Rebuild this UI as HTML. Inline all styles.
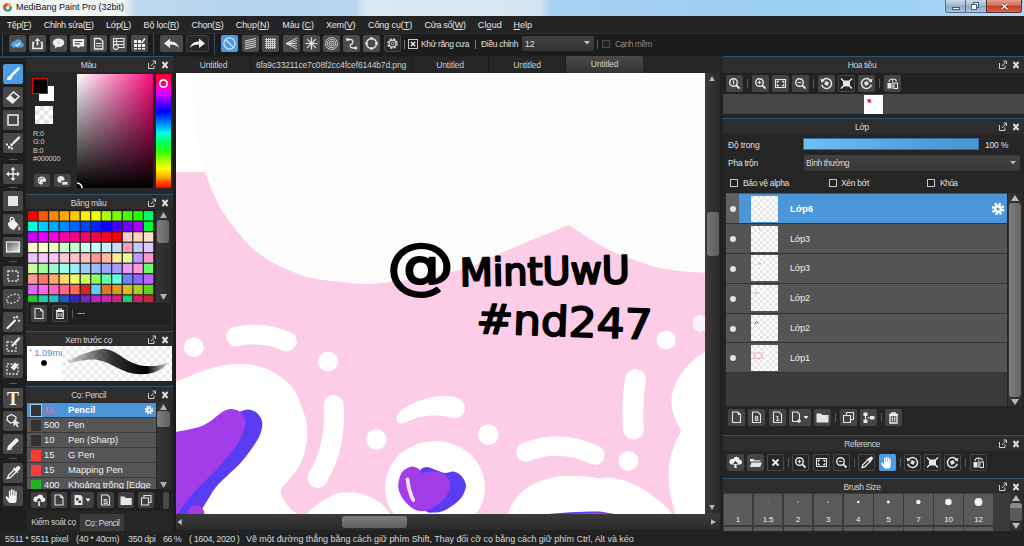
<!DOCTYPE html>
<html lang="vi">
<head>
<meta charset="utf-8">
<title>MediBang Paint Pro (32bit)</title>
<style>
*{box-sizing:border-box;margin:0;padding:0}
html,body{width:1024px;height:546px;overflow:hidden;background:#212121}
body{position:relative;font-family:"Liberation Sans","DejaVu Sans",sans-serif;font-size:10px;color:#dcdcdc;line-height:1}
.abs{position:absolute}
svg{display:block}
#title{left:0;top:0;width:1024px;height:16px;background:linear-gradient(90deg,#f0f4f2 0,#eef3f2 122px,#bfd9ee 136px,#b3d3ee 250px,#b7d6ef 355px,#dce8f3 366px,#d6e5f2 540px,#a9d0f0 552px,#9ccdf3 760px,#9fd0f5 900px,#b0daf8 1024px)}
#title .tt{left:16px;top:3px;font-size:9px;color:#111;white-space:nowrap}
#menubar{left:0;top:16px;width:1024px;height:17px;background:#242424}
#menubar span{position:absolute;top:5px;font-size:9px;color:#e4e4e4;white-space:nowrap;letter-spacing:-.2px}
#toolbar{left:0;top:33px;width:1024px;height:23px;background:#1c1c1c;border-top:1px solid #2c2c2c}
.tb{position:absolute;top:35.200px;width:17px;height:17px;background:#4b4b4b;border-radius:2px}
.ph{position:absolute;height:16px;background:#2e2c2c;border-top:1px solid #2d5272;color:#d4d4d4;text-align:center;font-size:8.500px;letter-spacing:-.4px;line-height:16px;white-space:nowrap}
.ph i{position:absolute;right:0;top:3px;width:26px;height:10px}
.tool{position:absolute;left:3px;width:20px;height:20px;background:#484848;border-radius:2px}
.tsep{position:absolute;left:9px;width:8px;height:1px;background:#555}
.tab{position:absolute;top:57px;height:16px;color:#cfcfcf;text-align:center;font-size:8.500px;letter-spacing:-.16px;line-height:16px;border-right:1px solid #1a1a1a;white-space:nowrap;overflow:hidden}
.br{position:relative;height:15px;border-bottom:1px solid #3c3c3c;white-space:nowrap}
.br .sq{position:absolute;left:3.500px;top:1.800px;width:10.500px;height:10.500px}
.br .sz{position:absolute;left:17px;top:2.800px}
.br .nm{position:absolute;left:41px;top:2.800px}
.bb{position:absolute;top:492px;width:16px;height:16px;background:#404040;border-radius:2px}
.st{position:absolute;top:535px;font-size:9px;color:#d8d8d8;white-space:nowrap;letter-spacing:-.3px}
.rb{position:absolute;height:17px;background:#444;border-radius:2px}
</style>
</head>
<body>

<div id="title" class="abs"><span class="abs tt">MediBang Paint Pro (32bit)</span>
<svg class="abs" style="left:3px;top:3px" width="9" height="9" viewBox="0 0 9 9"><circle cx="4.500" cy="4.500" r="4.300" fill="#38a860"/><path d="M4.500 .2a4.300 4.300 0 0 0-3.800 6.300l3.800-2z" fill="#e04848"/><path d="M4.500 .2a4.300 4.300 0 0 1 4.200 3.500l-4.200.8z" fill="#f0b030"/><path d="M8.700 3.700a4.300 4.300 0 0 1-2 4.500l-2.200-3.700z" fill="#3880d8"/><circle cx="4.700" cy="4.700" r="1.700" fill="#f4f4f4"/></svg>
<div class="abs wc-min" style="left:945px;top:0;width:21px;height:13px;border:1px solid #5a6d80;border-top:0;border-radius:0 0 0 3px;background:linear-gradient(#c8d8e8,#a4bcd4 45%,#8aa8c6 50%,#a8c4de)"><div class="abs" style="left:6px;top:7px;width:8px;height:3px;background:#fff;border:1px solid #465a70"></div></div>
<div class="abs" style="left:965px;top:0;width:22px;height:13px;border:1px solid #5a6d80;border-top:0;background:linear-gradient(#c8d8e8,#a4bcd4 45%,#8aa8c6 50%,#a8c4de)"><div class="abs" style="left:7px;top:2px;width:6px;height:6px;border:1px solid #465a70;background:#e8eef4"></div><div class="abs" style="left:5px;top:4px;width:6px;height:6px;border:1px solid #465a70;background:#fff"></div></div>
<div class="abs wc-close" style="left:986px;top:0;width:36px;height:13px;border:1px solid #5a3030;border-top:0;border-radius:0 0 3px 0;background:linear-gradient(#e8a090,#d46a58 45%,#c03c28 50%,#d46848)"><svg class="abs" style="left:13px;top:3px" width="9" height="7" viewBox="0 0 9 7"><path d="M1.500 .8l6 5.400M7.500 .8l-6 5.400" stroke="#4a2020" stroke-width="2.600"/><path d="M1.500 .8l6 5.400M7.500 .8l-6 5.400" stroke="#fff" stroke-width="1.500"/></svg></div>
</div>
<div id="menubar" class="abs">
<span style="left:6.8px;letter-spacing:-0.45px">Tệp(<u>F</u>)</span>
<span style="left:43.8px;letter-spacing:-0.3px">Chỉnh sửa(<u>E</u>)</span>
<span style="left:106px;letter-spacing:-0.35px">Lớp(<u>L</u>)</span>
<span style="left:143.6px;letter-spacing:-0.22px">Bộ lọc(<u>R</u>)</span>
<span style="left:191.4px;letter-spacing:-0.2px">Chọn(<u>S</u>)</span>
<span style="left:235.7px;letter-spacing:-0.05px">Chụp(<u>N</u>)</span>
<span style="left:282.3px;letter-spacing:-0.14px">Màu (<u>C</u>)</span>
<span style="left:326px;letter-spacing:-0.2px">Xem(<u>V</u>)</span>
<span style="left:368px;letter-spacing:-0.1px">Công cụ(<u>T</u>)</span>
<span style="left:424.5px;letter-spacing:-0.32px">Cửa sổ(<u>W</u>)</span>
<span style="left:477.8px;letter-spacing:0.12px">Cl<u>o</u>ud</span>
<span style="left:513.4px;letter-spacing:0px"><u>H</u>elp</span>
</div>
<div id="toolbar" class="abs"></div>
<div class="abs" style="left:2px;top:34px;width:1px;height:21px;background:#2f4d69"></div>
<div class="abs" style="left:153px;top:34px;width:1px;height:21px;background:#2f4d69"></div>
<div class="abs" style="left:214px;top:34px;width:1px;height:21px;background:#2f4d69"></div>
<!-- toolbar group 1 -->
<div class="tb" style="left:9px"><svg width="17" height="17" viewBox="0 0 17 17"><path d="M4.5 12.5h8a2.6 2.6 0 0 0 .4-5.1 3.6 3.6 0 0 0-6.9-.8A3 3 0 0 0 4.500 12.500z" fill="#5b9fe6"/><path d="M6.5 9.300l1.700 1.600 2.900-3.200" fill="none" stroke="#e9f2ff" stroke-width="1.300"/></svg></div>
<div class="tb" style="left:29.400px"><svg width="17" height="17" viewBox="0 0 17 17"><path d="M5.500 7.500h-1.500v6h9v-6h-1.500" fill="none" stroke="#ececec" stroke-width="1.700"/><path d="M8.500 10.500v-6.500" stroke="#ececec" stroke-width="1.700"/><path d="M5.800 6l2.700-3 2.700 3z" fill="#ececec"/></svg></div>
<div class="tb" style="left:49.700px"><svg width="17" height="17" viewBox="0 0 17 17"><ellipse cx="8.500" cy="7.800" rx="5.800" ry="4.200" fill="#ececec"/><path d="M5.500 10.500l-.8 3.200 3.600-2.400z" fill="#ececec"/><circle cx="8.500" cy="7.500" r="1" fill="#bdbdbd"/></svg></div>
<div class="tb" style="left:70px"><svg width="17" height="17" viewBox="0 0 17 17"><path d="M2.800 4h11.400v7.500h-4.200l-1.500 2-1.500-2h-4.200z" fill="#ececec"/><path d="M4.800 6.500h7.400M4.800 8.800h5" stroke="#4b4b4b" stroke-width="1.200"/></svg></div>
<div class="tb" style="left:90.300px"><svg width="17" height="17" viewBox="0 0 17 17"><path d="M4.500 3.500h5.500l2.800 2.800v7.700h-8.300z" fill="none" stroke="#ececec" stroke-width="1.300"/><path d="M6 8.500h5.500M6 11h5.500" stroke="#ececec" stroke-width="1.200"/></svg></div>
<div class="tb" style="left:110px"><svg width="17" height="17" viewBox="0 0 17 17"><path d="M3.500 3.500h10.500v9h-10.500zM3.500 6.500h10.500M3.500 9.500h10.500M6.500 3.500v9" fill="none" stroke="#e4e4e4" stroke-width="1.100"/><circle cx="5.800" cy="12" r="2.400" fill="#4b4b4b" stroke="#e4e4e4" stroke-width="1.100"/></svg></div>
<div class="tb" style="left:130.500px"><svg width="17" height="17" viewBox="0 0 17 17"><path d="M3 5h3v3h-3zM7 5h3v3h-3zM3 9h3v3h-3zM7 9h3v3h-3zM11 9h3v3h-3zM3 13h3v1.500h-3zM7 13h3v1.500h-3zM11 13h3v1.500h-3z" fill="#ececec"/><path d="M10.500 8l3.500-4.500" stroke="#ececec" stroke-width="1.600"/></svg></div>
<!-- undo / redo -->
<div class="tb" style="left:160px;width:23px"><svg width="23" height="17" viewBox="0 0 23 17"><path d="M4 8.500l6-5v3c4.500 0 8 2 9 6.500-2.200-2.600-5-3.400-9-3.400v3.400z" fill="#f0f0f0"/></svg></div>
<div class="tb" style="left:186px;width:23px;background:#282828;border:1px solid #3d3d3d"><svg width="21" height="15" viewBox="1 1 21 15"><path d="M19 8.500l-6-5v3c-4.500 0-8 2-9 6.500 2.200-2.600 5-3.400 9-3.400v3.400z" fill="#f0f0f0"/></svg></div>
<!-- snap group -->
<div class="tb" style="left:221px;background:#4a9ce4"><svg width="17" height="17" viewBox="0 0 17 17"><circle cx="8.500" cy="8.500" r="5.600" fill="none" stroke="#cfe6fb" stroke-width="1.200"/><path d="M4.800 4.500l7.600 7.800" stroke="#cfe6fb" stroke-width="1.200"/></svg></div>
<div class="tb" style="left:241.500px"><svg width="17" height="17" viewBox="0 0 17 17"><path d="M3 6l11-2.500M3 8l11-2.500M3 10l11-2.500M3 12l11-2.500M3 14l11-2.500" stroke="#d8d8d8" stroke-width="1"/></svg></div>
<div class="tb" style="left:262px"><svg width="17" height="17" viewBox="0 0 17 17"><path d="M4.500 3v11M6.500 3v11M8.500 3v11M10.500 3v11M12.500 3v11M3 4.500h11M3 6.500h11M3 8.500h11M3 10.500h11M3 12.500h11" stroke="#d8d8d8" stroke-width=".9"/></svg></div>
<div class="tb" style="left:282.500px"><svg width="17" height="17" viewBox="0 0 17 17"><path d="M3 8.500l11-5.500M3 8.500l11-2.800M3 8.500h11M3 8.500l11 2.800M3 8.500l11 5.500" stroke="#d8d8d8" stroke-width="1"/></svg></div>
<div class="tb" style="left:302.500px"><svg width="17" height="17" viewBox="0 0 17 17"><path d="M8.500 2.500v12M2.500 8.500h12M4.200 4.200l8.600 8.600M12.800 4.200l-8.600 8.600" stroke="#e4e4e4" stroke-width="1.200"/></svg></div>
<div class="tb" style="left:323px"><svg width="17" height="17" viewBox="0 0 17 17"><g fill="none" stroke="#d8d8d8" stroke-width=".9"><circle cx="8.500" cy="8.500" r="6"/><circle cx="8.500" cy="8.500" r="4.200"/><circle cx="8.500" cy="8.500" r="2.500"/><circle cx="8.500" cy="8.500" r=".8"/></g></svg></div>
<div class="tb" style="left:343px"><svg width="17" height="17" viewBox="0 0 17 17"><path d="M4.500 4.500h3c3 0 3 4 1 4.500s-2 4 1.500 4h3" fill="none" stroke="#e4e4e4" stroke-width="1.300"/><circle cx="4.500" cy="4.500" r="1.500" fill="#e4e4e4"/><circle cx="12.800" cy="13" r="1.500" fill="#e4e4e4"/></svg></div>
<div class="tb" style="left:363px"><svg width="17" height="17" viewBox="0 0 17 17"><circle cx="8.500" cy="8.500" r="5" fill="none" stroke="#e4e4e4" stroke-width="1.400"/><g fill="#e4e4e4"><circle cx="8.500" cy="3.500" r="1.400"/><circle cx="8.500" cy="13.500" r="1.400"/><circle cx="3.500" cy="8.500" r="1.400"/><circle cx="13.500" cy="8.500" r="1.400"/></g></svg></div>
<div class="tb" style="left:384px;background:#2b2b2b;border:1px solid #444"><svg width="15" height="15" viewBox="1 1 15 15"><circle cx="8.500" cy="8.500" r="4.700" fill="none" stroke="#e4e4e4" stroke-width="1.300" stroke-dasharray="2.200 1.500"/><circle cx="8.500" cy="8.500" r="3.400" fill="none" stroke="#e4e4e4" stroke-width="1.100"/><circle cx="8.500" cy="8.500" r="1.300" fill="none" stroke="#e4e4e4" stroke-width=".9"/></svg></div>
<!-- options -->
<div class="abs" style="left:404px;top:40px;width:1px;height:9px;background:#7a7a7a"></div>
<div class="abs" style="left:408px;top:39px;width:10px;height:10px;border:1px solid #c8c8c8;background:#1f1f1f"><svg width="8" height="8" viewBox="0 0 8 8"><path d="M1.800 1.800l4.400 4.400M6.200 1.800l-4.400 4.400" stroke="#e8e8e8" stroke-width="1.400"/></svg></div>
<div class="abs" style="left:421px;top:40px;font-size:8.500px;color:#e0e0e0;white-space:nowrap;letter-spacing:-.37px">Khử răng cưa</div>
<div class="abs" style="left:475px;top:40px;width:1px;height:9px;background:#7a7a7a"></div>
<div class="abs" style="left:481px;top:40px;font-size:8.500px;color:#e0e0e0;white-space:nowrap;letter-spacing:-.31px">Điều chỉnh</div>
<div class="abs" style="left:522px;top:36px;width:72px;height:15px;background:linear-gradient(#414141,#353535);border-radius:2px;font-size:8.500px;color:#e0e0e0;padding:4px 0 0 3px">12<svg class="abs" style="right:4px;top:5px" width="6" height="4" viewBox="0 0 6 4"><path d="M0 0h6l-3 3.500z" fill="#c0c0c0"/></svg></div>
<div class="abs" style="left:597px;top:40px;width:1px;height:9px;background:#5a5a5a"></div>
<div class="abs" style="left:602px;top:40px;width:8px;height:8px;border:1px solid #4a4a4a;background:#222"></div>
<div class="abs" style="left:615px;top:40px;font-size:8.500px;color:#8a8a8a;white-space:nowrap;letter-spacing:-.6px">Cạnh mềm</div>

<svg class="abs" id="cv" style="left:176px;top:73px" width="529" height="441" viewBox="176 73 529 441">
<defs><filter id="b1" x="-20%" y="-20%" width="140%" height="140%"><feGaussianBlur stdDeviation="0.7"/></filter></defs>
<rect x="176" y="73" width="529" height="441" fill="#fff"/>
<path d="M192.5,73 C192.5,100 195,125 198,139 C200,150 203,163 206,173 L206,300 L705,300 L705,73Z" fill="#fcfcfc" filter="url(#b1)"/>
<path d="M176,172 L205,172  C206.5,175.8 210.3,187.3 214.0,195.0 C217.7,202.7 219.7,208.3 227.0,218.0 C234.3,227.7 245.5,243.4 258.0,253.0 C270.5,262.6 287.3,270.5 302.0,275.4 C316.7,280.3 334.7,281.1 346.0,282.5 C357.3,283.9 362.7,284.1 370.0,284.0 C377.3,283.9 382.7,282.8 390.0,282.0 C397.3,281.2 405.7,280.2 414.0,279.0 C422.3,277.8 432.7,275.9 440.0,274.5 C447.3,273.1 453.0,271.6 458.0,270.3 C463.0,269.1 462.0,270.2 470.0,267.0 C478.0,263.8 494.3,256.0 506.0,251.0 C517.7,246.0 529.5,241.3 540.0,237.0 C550.5,232.7 564.2,227.0 569.0,225.0  C572.5,227.3 582.2,234.3 590.0,239.0 C597.8,243.7 604.3,248.2 616.0,253.0 C627.7,257.8 645.2,264.7 660.0,268.0 C674.8,271.3 697.5,272.2 705.0,273.0 L705,514 L176,514Z" fill="#fdcce6"/>
<g filter="url(#b1)"><path d="M176.0,382.0 C178.3,381.0 184.8,378.1 190.0,376.0 C195.2,373.9 201.2,371.3 207.0,369.5 C212.8,367.7 219.0,365.9 225.0,365.0 C231.0,364.1 237.5,363.8 243.0,364.0 C248.5,364.2 253.7,365.0 258.0,366.0 C262.3,367.0 265.2,368.2 269.0,370.0 C272.8,371.8 277.3,374.3 281.0,377.0 C284.7,379.7 288.2,382.7 291.0,386.0 C293.8,389.3 296.2,393.3 298.0,397.0 C299.8,400.7 300.7,404.2 302.0,408.0 C303.3,411.8 305.2,416.3 306.0,420.0 C306.8,423.7 306.9,426.2 307.0,430.0 C307.1,433.8 307.1,438.8 306.5,443.0 C305.9,447.2 305.1,451.3 303.7,455.5 C302.3,459.7 300.1,464.3 298.0,468.0 C295.9,471.7 293.3,474.7 291.0,477.5 C288.7,480.3 285.8,482.8 284.0,485.0 C282.2,487.2 280.6,488.6 280.5,491.0 C280.4,493.4 282.1,496.8 283.5,499.5 C284.9,502.2 286.8,504.6 289.0,507.0 C291.2,509.4 295.7,512.8 297.0,514.0 L176,514Z" fill="#fff"/><path d="M307.0,514.0 C308.2,512.8 311.3,509.2 314.0,507.0 C316.7,504.8 320.0,502.4 323.0,500.5 C326.0,498.6 329.0,496.8 332.0,495.5 C335.0,494.2 337.7,493.3 341.0,492.8 C344.3,492.3 348.5,492.3 352.0,492.5 C355.5,492.7 359.0,493.2 362.0,494.0 C365.0,494.8 367.5,495.9 370.0,497.0 C372.5,498.1 374.8,499.2 377.0,500.5 C379.2,501.8 380.8,502.8 383.0,505.0 C385.2,507.2 388.8,512.5 390.0,514.0 Z" fill="#fff"/><ellipse cx="435" cy="487.5" rx="50" ry="46.5" fill="#fff"/><path d="M508.0,514.0 C508.4,512.8 509.4,509.2 510.5,507.0 C511.6,504.8 512.8,502.7 514.4,500.5 C516.0,498.3 517.9,496.1 520.0,494.0 C522.1,491.9 524.2,489.6 527.0,487.7 C529.8,485.8 533.5,484.0 537.0,482.5 C540.5,481.0 543.9,479.7 547.7,478.7 C551.5,477.7 555.8,476.9 560.0,476.5 C564.2,476.1 568.5,476.0 573.0,476.0 C577.5,476.0 582.5,476.1 587.0,476.5 C591.5,476.9 596.3,478.0 600.0,478.2 C603.7,478.4 605.3,477.2 609.0,477.5 C612.7,477.8 617.7,478.8 622.0,480.0 C626.3,481.2 631.2,483.2 635.0,485.0 C638.8,486.8 642.0,488.7 645.0,490.5 C648.0,492.3 650.3,494.0 653.0,496.0 C655.7,498.0 658.5,500.4 661.0,502.5 C663.5,504.6 666.2,506.7 668.0,508.6 C669.8,510.5 671.3,513.1 672.0,514.0 Z" fill="#fff"/><path d="M705.0,352.0 C703.5,353.0 699.2,355.4 696.0,358.0 C692.8,360.6 688.8,364.4 686.0,367.6 C683.2,370.8 680.9,373.9 679.0,377.0 C677.1,380.1 675.7,383.0 674.5,386.0 C673.3,389.0 672.5,392.0 672.0,395.0 C671.5,398.0 671.4,401.0 671.6,404.0 C671.8,407.0 672.3,410.2 673.0,413.0 C673.7,415.8 674.9,418.3 676.0,420.7 C677.1,423.1 678.7,425.7 679.5,427.5 C680.3,429.3 681.1,429.8 680.7,431.7 C680.3,433.6 678.2,436.3 677.0,439.0 C675.8,441.7 674.5,445.0 673.4,448.0 C672.3,451.0 671.2,453.9 670.5,457.0 C669.8,460.1 669.3,463.3 669.0,466.5 C668.7,469.7 668.5,472.9 668.5,476.0 C668.5,479.1 668.8,482.1 669.0,484.8 C669.2,487.5 669.6,489.6 670.0,492.0 C670.4,494.4 671.0,497.0 671.6,499.5 C672.2,502.0 672.8,504.4 673.4,506.8 C674.0,509.2 674.7,512.8 675.0,514.0 L705,514Z" fill="#fff"/><circle cx="193.8" cy="347.3" r="10" fill="#fff"/><circle cx="328" cy="361.5" r="10" fill="#fff"/><circle cx="376.4" cy="439.5" r="10.3" fill="#fff"/><circle cx="488.2" cy="434.6" r="10.3" fill="#fff"/><circle cx="666" cy="340" r="9.6" fill="#fff"/><circle cx="628.4" cy="461" r="10" fill="#fff"/><ellipse cx="700" cy="323.5" rx="7.5" ry="8.5" fill="#fff" opacity=".75"/><path d="M236,336.5 Q262,330.5 287,341.5" fill="none" stroke="#fff" stroke-width="19.5" stroke-linecap="round"/><path d="M333.6,405 Q336.7,446.4 317.5,478" fill="none" stroke="#fff" stroke-width="20" stroke-linecap="round"/><path d="M396.5,418 C397,412 405,407 410.5,404.4 C420,399.5 433,396.5 442,395.8 C453,395 464.5,398 465,407.5 C465.3,415.5 458,420 450,417.5 C442,415 430,414.5 418,417.5 C410,419.5 404,424.5 400,423.5 C397,422.6 396.3,420 396.5,418Z" fill="#fff"/><path d="M526,452 Q560,438.5 595,455" fill="none" stroke="#fff" stroke-width="19.5" stroke-linecap="round"/><path d="M635.5,379.5 Q631.5,405 633.5,429" fill="none" stroke="#fff" stroke-width="21" stroke-linecap="round"/><circle cx="176" cy="472" r="1.5" fill="#fff"/></g>
<g filter="url(#b1)"><path d="M239.7,411.7 C241.1,411.3 245.2,409.3 248.0,409.5 C250.8,409.7 254.4,410.8 256.7,412.7 C259.0,414.6 261.3,417.8 262.0,421.0 C262.7,424.2 262.2,428.1 261.0,432.0 C259.8,435.9 257.7,439.7 254.5,444.6 C251.3,449.5 246.1,456.7 241.8,461.6 C237.6,466.5 233.3,469.8 229.0,474.0 C224.7,478.2 219.5,482.7 216.0,487.0 C212.5,491.3 210.2,496.0 207.8,499.8 C205.4,503.6 203.0,507.3 201.5,510.0 C200.0,512.7 199.4,515.0 199.0,516.0 L176,516 L176,440 Z" fill="#5a3cf2"/><path d="M176.0,431.8 C177.8,431.5 183.5,430.7 187.0,430.0 C190.5,429.3 194.0,428.5 197.0,427.6 C200.0,426.7 202.5,425.8 205.0,424.5 C207.5,423.2 209.1,422.1 212.0,420.0 C214.9,417.9 219.5,413.5 222.7,411.7 C225.9,409.9 228.2,409.0 231.0,409.0 C233.8,409.0 237.4,410.0 239.7,411.7 C242.0,413.4 244.1,416.4 245.0,419.0 C245.9,421.6 245.9,424.1 245.0,427.6 C244.1,431.1 242.4,435.4 239.7,440.0 C237.0,444.6 233.3,449.7 229.0,455.0 C224.7,460.3 219.3,466.3 214.0,472.0 C208.7,477.7 201.9,483.7 197.0,489.0 C192.1,494.3 187.7,499.9 184.5,504.0 C181.3,508.1 179.4,511.6 178.0,513.6 C176.6,515.6 176.3,515.6 176.0,516.0 Z" fill="#a23ae8"/><circle cx="196" cy="514" r="8.5" fill="#a63adc"/><path d="M418.0,476.0 C418.8,472.6 419.5,470.8 421.0,469.3 C422.5,467.8 424.8,467.0 427.0,467.0 C429.2,467.0 431.1,468.3 434.0,469.3 C436.9,470.3 441.3,472.6 444.5,473.0 C447.7,473.4 450.6,471.1 453.3,471.5 C456.0,471.9 458.5,473.1 460.6,475.2 C462.7,477.3 465.3,480.9 465.8,484.0 C466.3,487.1 465.2,490.8 463.6,494.0 C462.0,497.2 459.2,500.3 456.0,503.0 C452.8,505.7 448.2,508.8 444.5,510.4 C440.8,512.0 436.9,512.4 434.0,512.6 C431.1,512.8 429.3,513.1 427.0,511.8 C424.7,510.5 421.8,508.6 420.0,505.0 C418.2,501.4 416.3,494.8 416.0,490.0 C415.7,485.2 417.2,479.4 418.0,476.0Z" fill="#5a3cf2"/><path d="M398.3,484.0 C398.7,480.6 399.9,475.2 402.0,472.3 C404.1,469.4 408.1,467.3 410.8,466.7 C413.5,466.1 416.1,467.6 418.0,468.6 C419.9,469.7 420.5,472.5 422.5,473.0 C424.5,473.5 426.7,471.5 429.9,471.5 C433.1,471.5 438.4,471.6 441.6,473.0 C444.8,474.4 447.7,477.0 449.0,479.6 C450.3,482.2 450.4,485.2 449.6,488.4 C448.9,491.6 446.8,495.8 444.5,498.7 C442.2,501.6 439.1,503.9 435.7,506.0 C432.3,508.1 427.7,510.5 424.0,511.0 C420.3,511.5 416.9,510.6 413.7,509.0 C410.5,507.4 407.3,504.3 405.0,501.6 C402.7,498.9 400.9,495.7 399.8,492.8 C398.7,489.9 397.9,487.4 398.3,484.0Z" fill="#a23ae8"/><path d="M407.5,479.5 Q408.8,491 413.2,500" fill="none" stroke="#fbe2f6" stroke-width="3.8" stroke-linecap="round"/><path d="M548,514 Q575,511 600,511.6 L614,514Z" fill="#5a3cf2"/><path d="M572,514 Q590,512.3 604,512.6 L612,514Z" fill="#a23ae8"/></g>
<g font-family="'DejaVu Sans','Liberation Sans',sans-serif" fill="#000" stroke="#000" stroke-linejoin="round" stroke-linecap="round">
<text x="387" y="285.5" font-size="60" stroke-width="2.2" textLength="67" lengthAdjust="spacingAndGlyphs">@</text>
<text x="460" y="286" font-size="38" stroke-width="2.2" textLength="170" lengthAdjust="spacingAndGlyphs" transform="rotate(-1 460 286)">MintUwU</text>
<text x="476" y="333" font-size="41" stroke-width="1.8" textLength="176" lengthAdjust="spacingAndGlyphs" transform="rotate(2 476 333)">#nd247</text>
</g>
</svg>
<!-- canvas tabs -->
<div class="abs" style="left:173px;top:57px;width:550px;height:16px;background:#262626"></div>
<div class="tab" style="left:177px;width:74px">Untitled</div>
<div class="tab" style="left:251px;width:161px;letter-spacing:-.13px">6fa9c33211ce7c08f2cc4fcef6144b7d.png</div>
<div class="tab" style="left:412px;width:77px">Untitled</div>
<div class="tab" style="left:489px;width:77px">Untitled</div>
<div class="tab" style="left:566px;width:77px;top:56px;height:17px;background:linear-gradient(#4a4a4a,#343434);border-radius:2px 2px 0 0;border-right:0">Untitled</div>
<!-- canvas frame -->
<div class="abs" style="left:173px;top:73px;width:3px;height:458px;background:#1c1c1c"></div>
<!-- v scrollbar -->
<div class="abs" style="left:705px;top:73px;width:15px;height:441px;background:linear-gradient(90deg,#3a3a3a,#2a2a2a)"></div>
<svg class="abs" style="left:709px;top:76px" width="6" height="5" viewBox="0 0 8 7"><path d="M4 0l4 7h-8z" fill="#b8b8b8"/></svg>
<svg class="abs" style="left:709px;top:505px" width="6" height="5" viewBox="0 0 8 7"><path d="M0 0h8l-4 7z" fill="#b8b8b8"/></svg>
<div class="abs" style="left:707px;top:212px;width:12px;height:44px;background:linear-gradient(90deg,#767676,#5c5c5c);border-radius:3px"></div>
<!-- h scrollbar -->
<div class="abs" style="left:176px;top:514px;width:544px;height:16px;background:linear-gradient(#3a3a3a,#2a2a2a)"></div>
<svg class="abs" style="left:177px;top:519px" width="5" height="6" viewBox="0 0 6 8"><path d="M6 0v8l-6-4z" fill="#b8b8b8"/></svg>
<svg class="abs" style="left:711px;top:519px" width="5" height="6" viewBox="0 0 7 8"><path d="M0 0v8l7-4z" fill="#b8b8b8"/></svg>
<div class="abs" style="left:342px;top:516px;width:65px;height:12px;background:linear-gradient(#7c7c7c,#606060);border-radius:3px"></div>


<!-- left panels -->
<div class="abs" style="left:26px;top:57px;width:147px;height:474px;background:#262626"></div>
<!-- Màu -->
<div class="ph" style="left:26px;top:56px;width:147px;padding-right:22px">Màu<i><svg width="26" height="10" viewBox="0 0 26 10"><path d="M1.500 3v5.500h5.500v-3M4 6l4-4.500M5.500 1h3v3" fill="none" stroke="#cfcfcf" stroke-width="1"/><path d="M15.500 2l5 6M20.500 2l-5 6" stroke="#e0e0e0" stroke-width="2"/></svg></i></div>
<div class="abs" style="left:39px;top:86px;width:15px;height:15px;background:#fff"></div>
<div class="abs" style="left:32px;top:78px;width:16px;height:16px;background:#000;border:1.500px solid #e40808"></div>
<div class="abs" style="left:35px;top:106px;width:18px;height:18px;background:#fff;background-image:linear-gradient(45deg,#e2e2e2 25%,transparent 25%,transparent 75%,#e2e2e2 75%),linear-gradient(45deg,#e2e2e2 25%,transparent 25%,transparent 75%,#e2e2e2 75%);background-size:9px 9px;background-position:0 0,4.500px 4.500px"></div>
<div class="abs" style="left:33px;top:130px;font-size:7.200px;line-height:8.300px;color:#d0d0d0;letter-spacing:-.1px">R:0<br>G:0<br>B:0<br>#000000</div>
<div class="abs" style="left:34px;top:174px;width:16px;height:13px;background:#454545;border-radius:2px"><svg width="16" height="13" viewBox="0 0 16 13"><path d="M8 2.500a4.200 4 0 1 0 0 8c1 0 1-.8.600-1.400s0-1.300.900-1.300h1.300c.800 0 1.300-.500 1.300-1.300 0-2.200-2-4-4.100-4z" fill="#e6e6e6"/><circle cx="6" cy="5" r=".8" fill="#454545"/><circle cx="8.500" cy="4.300" r=".8" fill="#454545"/><circle cx="5.300" cy="7.300" r=".8" fill="#454545"/></svg></div>
<div class="abs" style="left:54px;top:174px;width:17px;height:13px;background:#454545;border-radius:2px"><svg width="17" height="13" viewBox="0 0 17 13"><path d="M7 2a3.600 3.400 0 1 0 0 6.800c.9 0 .9-.7.500-1.200s0-1.100.800-1.100h1.100c.7 0 1.100-.400 1.100-1.100 0-1.900-1.700-3.400-3.500-3.400z" fill="#e6e6e6"/><rect x="8" y="7.500" width="6" height="3.500" fill="#e6e6e6" stroke="#454545" stroke-width=".6"/></svg></div>
<div class="abs" style="left:77px;top:74px;width:76px;height:114px;background:linear-gradient(to top,#000 0,rgba(0,0,0,0) 100%),linear-gradient(to right,#fff 0,#ff0a7e 100%)"></div>
<svg class="abs" style="left:77px;top:180px" width="8" height="8" viewBox="0 0 8 8"><circle cx="0" cy="8" r="5" fill="none" stroke="#fff" stroke-width="1.600"/></svg>
<div class="abs" style="left:156px;top:74px;width:15px;height:114px;background:linear-gradient(to bottom,#ff0030 0,#ff0058 6%,#ff00c8 12%,#e000ff 17%,#6000ff 25%,#0000ff 33%,#0090ff 44%,#00ffe0 52%,#00ff60 60%,#30ff00 68%,#c0ff00 78%,#ffff00 83%,#ffa000 91%,#ff3000 97%,#ff0000 100%)"></div>
<svg class="abs" style="left:158px;top:78px" width="11" height="11" viewBox="0 0 11 11"><circle cx="5.500" cy="5.500" r="3.700" fill="none" stroke="#fff" stroke-width="1.700"/></svg>
<!-- Bảng màu -->
<div class="ph" style="left:26px;top:194px;width:147px;padding-right:22px">Bảng màu<i><svg width="26" height="10" viewBox="0 0 26 10"><path d="M1.500 3v5.500h5.500v-3M4 6l4-4.500M5.500 1h3v3" fill="none" stroke="#cfcfcf" stroke-width="1"/><path d="M15.500 2l5 6M20.500 2l-5 6" stroke="#e0e0e0" stroke-width="2"/></svg></i></div>
<svg class="abs" style="left:26px;top:209px" width="146" height="93" viewBox="26 209 146 93"><rect x="26" y="209" width="146" height="93" fill="#222"/><rect x="28.1" y="211.2" width="9.300" height="9.3" fill="#ff0000"/><rect x="38.6" y="211.2" width="9.300" height="9.3" fill="#ff5500"/><rect x="49.2" y="211.2" width="9.300" height="9.3" fill="#ff8800"/><rect x="59.7" y="211.2" width="9.300" height="9.3" fill="#ffaa00"/><rect x="70.2" y="211.2" width="9.300" height="9.3" fill="#ffcc00"/><rect x="80.8" y="211.2" width="9.300" height="9.3" fill="#ffee00"/><rect x="91.3" y="211.2" width="9.300" height="9.3" fill="#eeff00"/><rect x="101.8" y="211.2" width="9.300" height="9.3" fill="#aaff00"/><rect x="112.3" y="211.2" width="9.300" height="9.3" fill="#77ff00"/><rect x="122.9" y="211.2" width="9.300" height="9.3" fill="#44ff00"/><rect x="133.4" y="211.2" width="9.300" height="9.3" fill="#22ff00"/><rect x="143.9" y="211.2" width="9.300" height="9.3" fill="#00ff66"/><rect x="28.1" y="221.7" width="9.300" height="9.3" fill="#00ffdd"/><rect x="38.6" y="221.7" width="9.300" height="9.3" fill="#00ccff"/><rect x="49.2" y="221.7" width="9.300" height="9.3" fill="#00aaff"/><rect x="59.7" y="221.7" width="9.300" height="9.3" fill="#0088ff"/><rect x="70.2" y="221.7" width="9.300" height="9.3" fill="#0066ff"/><rect x="80.8" y="221.7" width="9.300" height="9.3" fill="#0044ff"/><rect x="91.3" y="221.7" width="9.300" height="9.3" fill="#0022ff"/><rect x="101.8" y="221.7" width="9.300" height="9.3" fill="#1100ff"/><rect x="112.3" y="221.7" width="9.300" height="9.3" fill="#4400ff"/><rect x="122.9" y="221.7" width="9.300" height="9.3" fill="#7700ff"/><rect x="133.4" y="221.7" width="9.300" height="9.3" fill="#aa00ff"/><rect x="143.9" y="221.7" width="9.300" height="9.3" fill="#00ff33"/><rect x="28.1" y="232.3" width="9.300" height="9.3" fill="#cc00ff"/><rect x="38.6" y="232.3" width="9.300" height="9.3" fill="#ee00ff"/><rect x="49.2" y="232.3" width="9.300" height="9.3" fill="#ff00dd"/><rect x="59.7" y="232.3" width="9.300" height="9.3" fill="#ff00aa"/><rect x="70.2" y="232.3" width="9.300" height="9.3" fill="#ff0088"/><rect x="80.8" y="232.3" width="9.300" height="9.3" fill="#ff0066"/><rect x="91.3" y="232.3" width="9.300" height="9.3" fill="#ff0044"/><rect x="101.8" y="232.3" width="9.300" height="9.3" fill="#ff0022"/><rect x="112.3" y="232.3" width="9.300" height="9.3" fill="#ff0000"/><rect x="122.9" y="232.3" width="9.300" height="9.3" fill="#ffcccc"/><rect x="133.4" y="232.3" width="9.300" height="9.3" fill="#ffd5c0"/><rect x="143.9" y="232.3" width="9.300" height="9.3" fill="#ffe0c8"/><rect x="28.1" y="242.8" width="9.300" height="9.3" fill="#fff5c8"/><rect x="38.6" y="242.8" width="9.300" height="9.3" fill="#ffffc8"/><rect x="49.2" y="242.8" width="9.300" height="9.3" fill="#eeffc8"/><rect x="59.7" y="242.8" width="9.300" height="9.3" fill="#d5ffc8"/><rect x="70.2" y="242.8" width="9.300" height="9.3" fill="#c8ffd0"/><rect x="80.8" y="242.8" width="9.300" height="9.3" fill="#c8ffe8"/><rect x="91.3" y="242.8" width="9.300" height="9.3" fill="#c8ffff"/><rect x="101.8" y="242.8" width="9.300" height="9.3" fill="#c8eeff"/><rect x="112.3" y="242.8" width="9.300" height="9.3" fill="#c8d8ff"/><rect x="122.9" y="242.8" width="9.300" height="9.3" fill="#ff99bb"/><rect x="133.4" y="242.8" width="9.300" height="9.3" fill="#c8c8ff"/><rect x="143.9" y="242.8" width="9.300" height="9.3" fill="#ddc8ff"/><rect x="28.1" y="253.3" width="9.300" height="9.3" fill="#e5c8ff"/><rect x="38.6" y="253.3" width="9.300" height="9.3" fill="#f5c8ff"/><rect x="49.2" y="253.3" width="9.300" height="9.3" fill="#ffc8f0"/><rect x="59.7" y="253.3" width="9.300" height="9.3" fill="#ffc8d8"/><rect x="70.2" y="253.3" width="9.300" height="9.3" fill="#ffc0c8"/><rect x="80.8" y="253.3" width="9.300" height="9.3" fill="#ffbfb8"/><rect x="91.3" y="253.3" width="9.300" height="9.3" fill="#ff9990"/><rect x="101.8" y="253.3" width="9.300" height="9.3" fill="#ffbb99"/><rect x="112.3" y="253.3" width="9.300" height="9.3" fill="#ffee99"/><rect x="122.9" y="253.3" width="9.300" height="9.3" fill="#e5ff99"/><rect x="133.4" y="253.3" width="9.300" height="9.3" fill="#bb99ff"/><rect x="143.9" y="253.3" width="9.300" height="9.3" fill="#ff99cc"/><rect x="28.1" y="263.8" width="9.300" height="9.3" fill="#ccff99"/><rect x="38.6" y="263.8" width="9.300" height="9.3" fill="#99ff99"/><rect x="49.2" y="263.8" width="9.300" height="9.3" fill="#99ffcc"/><rect x="59.7" y="263.8" width="9.300" height="9.3" fill="#99ffee"/><rect x="70.2" y="263.8" width="9.300" height="9.3" fill="#99eeff"/><rect x="80.8" y="263.8" width="9.300" height="9.3" fill="#99ccff"/><rect x="91.3" y="263.8" width="9.300" height="9.3" fill="#99bbff"/><rect x="101.8" y="263.8" width="9.300" height="9.3" fill="#99aaff"/><rect x="112.3" y="263.8" width="9.300" height="9.3" fill="#aa99ff"/><rect x="122.9" y="263.8" width="9.300" height="9.3" fill="#ee99ff"/><rect x="133.4" y="263.8" width="9.300" height="9.3" fill="#ff99dd"/><rect x="143.9" y="263.8" width="9.300" height="9.3" fill="#66ff66"/><rect x="28.1" y="274.4" width="9.300" height="9.3" fill="#ff9999"/><rect x="38.6" y="274.4" width="9.300" height="9.3" fill="#ff7766"/><rect x="49.2" y="274.4" width="9.300" height="9.3" fill="#ffaa66"/><rect x="59.7" y="274.4" width="9.300" height="9.3" fill="#ffdd66"/><rect x="70.2" y="274.4" width="9.300" height="9.3" fill="#eeff66"/><rect x="80.8" y="274.4" width="9.300" height="9.3" fill="#ccff66"/><rect x="91.3" y="274.4" width="9.300" height="9.3" fill="#88ff66"/><rect x="101.8" y="274.4" width="9.300" height="9.3" fill="#66ffaa"/><rect x="112.3" y="274.4" width="9.300" height="9.3" fill="#66ffee"/><rect x="122.9" y="274.4" width="9.300" height="9.3" fill="#6688ff"/><rect x="133.4" y="274.4" width="9.300" height="9.3" fill="#8866ff"/><rect x="143.9" y="274.4" width="9.300" height="9.3" fill="#bb66ff"/><rect x="28.1" y="284.9" width="9.300" height="9.3" fill="#dd66ff"/><rect x="38.6" y="284.9" width="9.300" height="9.3" fill="#ff66ee"/><rect x="49.2" y="284.9" width="9.300" height="9.3" fill="#ff66bb"/><rect x="59.7" y="284.9" width="9.300" height="9.3" fill="#ff6688"/><rect x="70.2" y="284.9" width="9.300" height="9.3" fill="#ff6655"/><rect x="80.8" y="284.9" width="9.300" height="9.3" fill="#dd2222"/><rect x="91.3" y="284.9" width="9.300" height="9.3" fill="#66ccff"/><rect x="101.8" y="284.9" width="9.300" height="9.3" fill="#dd7722"/><rect x="112.3" y="284.9" width="9.300" height="9.3" fill="#dd9922"/><rect x="122.9" y="284.9" width="9.300" height="9.3" fill="#ddbb22"/><rect x="133.4" y="284.9" width="9.300" height="9.3" fill="#aacc22"/><rect x="143.9" y="284.9" width="9.300" height="9.3" fill="#66cc22"/><rect x="28.1" y="295.4" width="9.300" height="6.6" fill="#22cc22"/><rect x="38.6" y="295.4" width="9.300" height="6.6" fill="#22ccaa"/><rect x="49.2" y="295.4" width="9.300" height="6.6" fill="#22bbcc"/><rect x="59.7" y="295.4" width="9.300" height="6.6" fill="#2255cc"/><rect x="70.2" y="295.4" width="9.300" height="6.6" fill="#3322cc"/><rect x="80.8" y="295.4" width="9.300" height="6.6" fill="#7722cc"/><rect x="91.3" y="295.4" width="9.300" height="6.6" fill="#bb22cc"/><rect x="101.8" y="295.4" width="9.300" height="6.6" fill="#cc22bb"/><rect x="112.3" y="295.4" width="9.300" height="6.6" fill="#cc2288"/><rect x="122.9" y="295.4" width="9.300" height="6.6" fill="#22cc66"/><rect x="133.4" y="295.4" width="9.300" height="6.6" fill="#cc2266"/><rect x="143.9" y="295.4" width="9.300" height="6.6" fill="#cc2233"/></svg>
<div class="abs" style="left:156px;top:210px;width:15px;height:92px;background:linear-gradient(90deg,#343434,#2a2a2a)"></div>
<svg class="abs" style="left:160px;top:212px" width="7" height="6" viewBox="0 0 7 6"><path d="M3.500 0l3.500 6h-7z" fill="#b0b0b0"/></svg>
<svg class="abs" style="left:160px;top:294px" width="7" height="6" viewBox="0 0 7 6"><path d="M0 0h7l-3.500 6z" fill="#b0b0b0"/></svg>
<div class="abs" style="left:157px;top:220px;width:12px;height:23px;background:linear-gradient(90deg,#7e7e7e,#636363);border-radius:3px"></div>
<div class="abs" style="left:27px;top:302px;width:145px;height:24px;background:#202020;border:1px solid #2c2c2c"></div>
<div class="abs" style="left:31px;top:305px;width:16px;height:17px;background:#404040;border-radius:2px"><svg width="16" height="17" viewBox="0 0 16 17"><path d="M4 3.500h5.500l2.500 2.500v7.500h-8z" fill="none" stroke="#e0e0e0" stroke-width="1.100"/><path d="M9.500 3.500v2.500h2.500" fill="none" stroke="#e0e0e0" stroke-width="1"/></svg></div>
<div class="abs" style="left:52px;top:305px;width:16px;height:17px;background:#2b2b2b;border:1px solid #454545;border-radius:2px"><svg width="14" height="15" viewBox="1 1 14 15"><path d="M4 5.500h8M6.500 5.500v-1.500h3v1.500M4.800 6.500h6.400v7h-6.400z" fill="none" stroke="#f0f0f0" stroke-width="1.200"/><path d="M6.900 8v4M9.100 8v4" stroke="#f0f0f0" stroke-width="1"/></svg></div>
<div class="abs" style="left:72px;top:309px;width:1px;height:9px;background:#555"></div>
<div class="abs" style="left:77px;top:309px;font-size:9px;color:#cfcfcf;letter-spacing:-.5px">---</div>
<!-- Xem trước cọ -->
<div class="ph" style="left:26px;top:331px;width:147px;padding-right:22px">Xem trước cọ<i><svg width="26" height="10" viewBox="0 0 26 10"><path d="M1.500 3v5.500h5.500v-3M4 6l4-4.500M5.500 1h3v3" fill="none" stroke="#cfcfcf" stroke-width="1"/><path d="M15.500 2l5 6M20.500 2l-5 6" stroke="#e0e0e0" stroke-width="2"/></svg></i></div>
<div class="abs" style="left:27px;top:346px;width:35px;height:35px;background:#fff"></div>
<div class="abs" style="left:29px;top:348px;font-size:9.300px;color:#4a8ad8;white-space:nowrap;width:33px;overflow:hidden"><span style="font-size:7px;vertical-align:2px">*</span> 1.09mm</div>
<div class="abs" style="left:41px;top:360px;width:6px;height:6px;border-radius:50%;background:radial-gradient(#000 40%,#555 100%)"></div>
<svg class="abs" style="left:62px;top:346px" width="110" height="35" viewBox="0 0 110 35"><defs><pattern id="ck" width="8" height="8" patternUnits="userSpaceOnUse"><rect width="8" height="8" fill="#fff"/><rect width="4" height="4" fill="#ececec"/><rect x="4" y="4" width="4" height="4" fill="#ececec"/></pattern><linearGradient id="bs" x1="0" x2="1"><stop offset="0" stop-color="#000" stop-opacity=".15"/><stop offset=".45" stop-color="#000" stop-opacity=".8"/><stop offset=".8" stop-color="#000"/><stop offset="1" stop-color="#000" stop-opacity=".2"/></linearGradient><filter id="bb"><feGaussianBlur stdDeviation=".6"/></filter></defs><rect width="110" height="35" fill="url(#ck)"/><path d="M6 15C11 12 20 8 34 4S55 8 65 14 84 20.500 92 20s9-2 12-3.500l.5 2C101 22 97 25 92 26.500S75 29.500 65 26 47 16 36 14 14 16.500 6 17z" fill="url(#bs)" filter="url(#bb)"/></svg>
<!-- Cọ: Pencil -->
<div class="ph" style="left:26px;top:386px;width:147px;padding-right:22px">Cọ: Pencil<i><svg width="26" height="10" viewBox="0 0 26 10"><path d="M1.500 3v5.500h5.500v-3M4 6l4-4.500M5.500 1h3v3" fill="none" stroke="#cfcfcf" stroke-width="1"/><path d="M15.500 2l5 6M20.500 2l-5 6" stroke="#e0e0e0" stroke-width="2"/></svg></i></div>
<div class="abs" style="left:27px;top:403.300px;width:129px;height:86px;background:#555;overflow:hidden;font-size:9.300px;color:#f0f0f0">
<div class="br" style="background:#4b96d8"><b class="sq" style="background:#333;box-shadow:0 0 0 1px #9cc8f0"></b><span class="sz" style="color:#e86a8a;font-weight:bold">15</span><span class="nm" style="font-weight:bold;color:#fff">Pencil</span><svg class="abs" style="right:2px;top:2px" width="10" height="10" viewBox="0 0 10 10"><circle cx="5" cy="5" r="3" fill="none" stroke="#fff" stroke-width="2.600" stroke-dasharray="1.400 .950"/><circle cx="5" cy="5" r="2.600" fill="#fff"/><circle cx="5" cy="5" r="1" fill="#4b96d8"/></svg></div>
<div class="br"><b class="sq" style="background:#333"></b><span class="sz">500</span><span class="nm">Pen</span></div>
<div class="br"><b class="sq" style="background:#333"></b><span class="sz">10</span><span class="nm">Pen (Sharp)</span></div>
<div class="br"><b class="sq" style="background:#fa3c3c"></b><span class="sz">15</span><span class="nm">G Pen</span></div>
<div class="br"><b class="sq" style="background:#fa3c3c"></b><span class="sz">15</span><span class="nm">Mapping Pen</span></div>
<div class="br"><b class="sq" style="background:#22b222"></b><span class="sz">400</span><span class="nm">Khoảng trống [Edge</span></div>
</div>
<div class="abs" style="left:157px;top:402px;width:14px;height:87px;background:linear-gradient(90deg,#343434,#2a2a2a)"></div>
<svg class="abs" style="left:160px;top:404px" width="7" height="6" viewBox="0 0 7 6"><path d="M3.500 0l3.500 6h-7z" fill="#b0b0b0"/></svg>
<svg class="abs" style="left:160px;top:482px" width="7" height="6" viewBox="0 0 7 6"><path d="M0 0h7l-3.500 6z" fill="#b0b0b0"/></svg>
<div class="abs" style="left:157px;top:411px;width:13px;height:16px;background:linear-gradient(90deg,#7e7e7e,#636363);border-radius:3px"></div>
<!-- brush buttons -->
<div class="abs" style="left:27px;top:489px;width:145px;height:22px;background:#202020"></div>
<div class="bb" style="left:31px"><svg width="16" height="16" viewBox="0 0 16 16"><path d="M4.500 10h7.500a2.300 2.300 0 0 0 .3-4.600 3.300 3.300 0 0 0-6.300-.8 2.700 2.700 0 0 0-1.500 5.400z" fill="#eee"/><path d="M8 7v6M5.800 9.500l2.200-2.700 2.200 2.700" fill="none" stroke="#404040" stroke-width="1.300"/><path d="M8 9.500v4.500" stroke="#eee" stroke-width="1.600"/></svg></div>
<div class="bb" style="left:51px"><svg width="16" height="16" viewBox="0 0 16 16"><path d="M4 3h5.500l2.500 2.500v7.500h-8z" fill="none" stroke="#e0e0e0" stroke-width="1.100"/><path d="M9.500 3v2.500h2.500" fill="none" stroke="#e0e0e0" stroke-width="1"/></svg></div>
<div class="bb" style="left:71px;width:23px"><svg width="23" height="16" viewBox="0 0 23 16"><path d="M3.500 3h6l2 2v8h-8z" fill="#e6e6e6"/><path d="M5 6h2.500v2.500h-2.500zM7.500 8.500h2.500v2.500h-2.500z" fill="#404040"/><path d="M14.500 6.500h5l-2.500 3.500z" fill="#e6e6e6"/></svg></div>
<div class="bb" style="left:97px;width:17px"><svg width="17" height="16" viewBox="0 0 17 16"><path d="M4.500 3h6l2 2v8h-8z" fill="none" stroke="#e0e0e0" stroke-width="1.100"/><text x="8.500" y="11.500" text-anchor="middle" font-size="7.500" font-weight="bold" fill="#e0e0e0" font-family="'Liberation Sans',sans-serif">S</text></svg></div>
<div class="bb" style="left:118px"><svg width="16" height="16" viewBox="0 0 16 16"><path d="M2.500 4.500h4l1.200 1.500h6v7h-11.200z" fill="#e6e6e6"/></svg></div>
<div class="bb" style="left:138px"><svg width="16" height="16" viewBox="0 0 16 16"><path d="M6 3.500h7v7h-7z" fill="none" stroke="#e0e0e0" stroke-width="1.100"/><path d="M3.500 6h7v7h-7z" fill="#404040" stroke="#e0e0e0" stroke-width="1.100"/></svg></div>
<div class="abs" style="left:162.500px;top:492px;width:6px;height:17px;background:#484848;border-radius:2px"></div>
<!-- bottom tabs -->
<div class="abs" style="left:27px;top:514px;width:53px;height:16px;background:#262626;color:#cfcfcf;font-size:8.500px;line-height:17px;text-align:center;white-space:nowrap;letter-spacing:-.38px">Kiểm soát cọ</div>
<div class="abs" style="left:80px;top:514px;width:44px;height:17px;background:#3b3b3b;color:#d8d8d8;font-size:8.500px;line-height:18px;text-align:center;white-space:nowrap;letter-spacing:-.4px">Cọ: Pencil</div>
<!-- tool strip -->
<div class="abs" style="left:0;top:57px;width:26px;height:474px;background:#1f1f1f"></div>
<div class="abs" style="left:0;top:56px;width:26px;height:2px;background:#2c4258"></div>
<div class="tool" style="top:64px;background:#4a9ce4"><svg width="20" height="20" viewBox="0 0 20 20"><path d="M15.500 4.500l-7 7" stroke="#fff" stroke-width="2.600" stroke-linecap="round"/><path d="M4 16c0-2.500 1.500-4.500 3.500-4l1.500 1.500c.5 2-2.500 3-5 2.500z" fill="#fff"/></svg></div>
<div class="tool" style="top:87px"><svg width="20" height="20" viewBox="0 0 20 20"><path d="M4 11.500l6.500-6.500 5.500 4.500-6.500 6.500z" fill="none" stroke="#eee" stroke-width="1.500"/><path d="M4 11.500l3.200-3.200 5.500 4.500-3.200 3.200z" fill="#eee"/></svg></div>
<div class="tool" style="top:110px"><svg width="20" height="20" viewBox="0 0 20 20"><rect x="5" y="5" width="10" height="10" fill="none" stroke="#eee" stroke-width="1.500"/></svg></div>
<div class="tool" style="top:133px"><svg width="20" height="20" viewBox="0 0 20 20"><path d="M16 4.500l-5.500 5.500" stroke="#eee" stroke-width="2.400" stroke-linecap="round"/><rect x="7.500" y="10.500" width="2.500" height="2.500" fill="#eee"/><rect x="5" y="13" width="2.500" height="2.500" fill="#eee"/><rect x="3" y="10.500" width="2" height="2" fill="#eee"/><rect x="8" y="14.500" width="2" height="2" fill="#eee"/></svg></div>
<div class="tool" style="top:164px"><svg width="20" height="20" viewBox="0 0 20 20"><path d="M10 3l2.500 3h-5zM10 17l2.500-3h-5zM3 10l3-2.500v5zM17 10l-3-2.500v5z" fill="#eee"/><path d="M10 5v10M5 10h10" stroke="#eee" stroke-width="1.400"/></svg></div>
<div class="tool" style="top:191px"><svg width="20" height="20" viewBox="0 0 20 20"><rect x="5" y="5" width="10" height="10" fill="#e6e6e6"/></svg></div>
<div class="tool" style="top:214px"><svg width="20" height="20" viewBox="0 0 20 20"><path d="M5 9l5-4 5.500 5.500-4.500 5.500c-2 .5-7-4-6-7z" fill="#eee"/><path d="M7.500 7.500c-1-3 .5-4.500 2-4s2 2.500 1.500 4" fill="none" stroke="#eee" stroke-width="1.200"/><path d="M16 11.500c1 1.500 1.500 2.500 1.500 3.500a1.300 1.300 0 0 1-2.600 0c0-1 .5-2 1.100-3.500z" fill="#e8a0a0"/></svg></div>
<div class="tool" style="top:237px"><svg width="20" height="20" viewBox="0 0 20 20"><defs><linearGradient id="gg" x1="0" y1="0" x2="1" y2="1"><stop offset="0" stop-color="#555"/><stop offset="1" stop-color="#eee"/></linearGradient></defs><rect x="3.500" y="5" width="13" height="10" fill="url(#gg)" stroke="#eee" stroke-width="1.200"/></svg></div>
<div class="tool" style="top:266px"><svg width="20" height="20" viewBox="0 0 20 20"><rect x="5" y="5" width="10" height="10" fill="none" stroke="#ddd" stroke-width="1.500" stroke-dasharray="2 1.500"/></svg></div>
<div class="tool" style="top:289px"><svg width="20" height="20" viewBox="0 0 20 20"><path d="M4 12c-1-3 2-5 5-6s7-1.500 7.500 1.500-2.500 5-5 6-6.500 1.500-7.500-1.500z" fill="none" stroke="#ccc" stroke-width="1.300" stroke-dasharray="2 1.500"/></svg></div>
<div class="tool" style="top:312px"><svg width="20" height="20" viewBox="0 0 20 20"><path d="M4.500 16l7.500-7.500" stroke="#eee" stroke-width="2.200" stroke-linecap="round"/><path d="M14 3.500v3M12.500 5h3M16 7.500v2.500M14.800 8.800h2.400M11 4.500v2M10 5.500h2" stroke="#eee" stroke-width="1"/></svg></div>
<div class="tool" style="top:335px"><svg width="20" height="20" viewBox="0 0 20 20"><rect x="4" y="7" width="9" height="9" fill="none" stroke="#ddd" stroke-width="1.300" stroke-dasharray="2 1.500"/><path d="M16 3.500l-6.500 7" stroke="#eee" stroke-width="2.400" stroke-linecap="round"/></svg></div>
<div class="tool" style="top:358px"><svg width="20" height="20" viewBox="0 0 20 20"><rect x="4" y="6" width="11" height="10" fill="none" stroke="#ddd" stroke-width="1.300" stroke-dasharray="2 1.500"/><path d="M7.500 9.500l4.500-5 3.500 3-4.500 5z" fill="#eee"/></svg></div>
<div class="tool" style="top:388px"><svg width="20" height="20" viewBox="0 0 20 20"><text x="10" y="16.500" text-anchor="middle" font-family="'Liberation Serif',serif" font-weight="bold" font-size="18" fill="#f2f2f2">T</text></svg></div>
<div class="tool" style="top:411px"><svg width="20" height="20" viewBox="0 0 20 20"><path d="M4.500 5.500l4-2 4.500 2.500-.5 4.500-5 1.500-3.500-3z" fill="none" stroke="#eee" stroke-width="1.300"/><path d="M10.500 8.500l6.500 3.500-3 .8 1.600 3-1.300.7-1.600-3-2.200 2z" fill="#eee"/></svg></div>
<div class="tool" style="top:434px"><svg width="20" height="20" viewBox="0 0 20 20"><path d="M4 15.500l1-3.500 7.500-7.500c1-1 4 1.500 2.800 2.800l-7.500 7.500z" fill="#eee"/><path d="M4 16l5-1" stroke="#eee" stroke-width="1"/></svg></div>
<div class="tool" style="top:463px"><svg width="20" height="20" viewBox="0 0 20 20"><path d="M4.500 15.500l1-3 6-6 2 2-6 6z" fill="none" stroke="#eee" stroke-width="1.400"/><path d="M10.500 5l4.500 4.500M12.500 6l2-2c1-1 2.800.8 1.800 1.800l-2 2z" stroke="#eee" stroke-width="1.600" fill="#eee"/></svg></div>
<div class="tool" style="top:486px"><svg width="20" height="20" viewBox="0 0 20 20"><path d="M6.600 17c-1.800-1.800-3.300-4.100-3.900-5.600-.4-1.100 1-1.700 1.700-.7l1.500 1.900v-7.300c0-1.100 1.500-1.100 1.500 0v4.100h.6v-5.500c0-1.100 1.500-1.100 1.500 0v5.500h.6v-4.900c0-1.100 1.500-1.100 1.500 0v5.200h.6v-3.800c0-1.100 1.500-1.100 1.500 0v7c0 2-.7 3.300-1.400 4.100z" fill="#f2f2f2"/></svg></div>
<div class="tsep" style="top:159px"></div>
<div class="tsep" style="top:187px"></div>
<div class="tsep" style="top:261px"></div>
<div class="tsep" style="top:383px"></div>
<div class="tsep" style="top:458px"></div>
<!-- right panels -->
<div class="abs" style="left:723px;top:57px;width:301px;height:474px;background:#252525"></div>
<div class="ph" style="left:723px;top:56px;width:301px;padding-right:23px;height:17px">Hoa tiêu<i><svg width="26" height="10" viewBox="0 0 26 10"><path d="M1.500 3v5.500h5.500v-3M4 6l4-4.500M5.500 1h3v3" fill="none" stroke="#cfcfcf" stroke-width="1"/><path d="M15.500 2l5 6M20.500 2l-5 6" stroke="#e0e0e0" stroke-width="2"/></svg></i></div>
<div class="abs" style="left:723px;top:73px;width:301px;height:21px;background:#212121"></div>
<div class="rb" style="left:726px;top:75px;width:17px"><svg width="17" height="17" viewBox="0 0 17 17"><circle cx="7.500" cy="7.500" r="3.800" fill="none" stroke="#e6e6e6" stroke-width="1.400"/><path d="M10.300 10.300l3.200 3.200" stroke="#e6e6e6" stroke-width="1.800"/><path d="M7.600 5.600v3.800M6.700 6.300l.9-.7" stroke="#e6e6e6" stroke-width="1.100" fill="none"/></svg></div>
<div class="abs" style="left:747px;top:79px;width:1px;height:9px;background:#5a5a5a"></div>
<div class="rb" style="left:752px;top:75px;width:17px"><svg width="17" height="17" viewBox="0 0 17 17"><circle cx="7.500" cy="7.500" r="3.800" fill="none" stroke="#e6e6e6" stroke-width="1.400"/><path d="M10.300 10.300l3.200 3.200" stroke="#e6e6e6" stroke-width="1.800"/><path d="M5.700 7.500h3.600M7.500 5.700v3.600" stroke="#e6e6e6" stroke-width="1.100"/></svg></div>
<div class="rb" style="left:772px;top:75px;width:17px"><svg width="17" height="17" viewBox="0 0 17 17"><rect x="3.500" y="4.500" width="10" height="8" fill="none" stroke="#e6e6e6" stroke-width="1.100"/><path d="M5 6l2 0-2 2zM12 6l-2 0 2 2zM5 11l2 0-2-2zM12 11l-2 0 2-2z" fill="#e6e6e6" stroke="#e6e6e6" stroke-width=".5"/></svg></div>
<div class="rb" style="left:792px;top:75px;width:17px"><svg width="17" height="17" viewBox="0 0 17 17"><circle cx="7.500" cy="7.500" r="3.800" fill="none" stroke="#e6e6e6" stroke-width="1.400"/><path d="M10.300 10.300l3.200 3.200" stroke="#e6e6e6" stroke-width="1.800"/><path d="M5.700 7.500h3.600" stroke="#e6e6e6" stroke-width="1.100"/></svg></div>
<div class="abs" style="left:813px;top:79px;width:1px;height:9px;background:#5a5a5a"></div>
<div class="rb" style="left:818px;top:75px;width:17px"><svg width="17" height="17" viewBox="0 0 17 17"><path d="M4.200 6a5 5 0 1 1-.5 3.700" fill="none" stroke="#e6e6e6" stroke-width="1.500"/><path d="M2.500 3.500l.8 4 3.700-1.500z" fill="#e6e6e6"/><path d="M6 9l2-3 3 1.500-1.500 3.500z" fill="#e6e6e6"/></svg></div>
<div class="rb" style="left:838px;top:75px;width:17px;background:#262626;box-shadow:inset 0 0 0 1px #484848"><svg width="17" height="17" viewBox="0 0 17 17"><rect x="5" y="5.500" width="7" height="6" fill="#e6e6e6"/><path d="M3 3.500l2.500 2.500M14 3.500l-2.500 2.500M3 13.500l2.500-2.500M14 13.500l-2.500-2.500" stroke="#e6e6e6" stroke-width="1.500"/></svg></div>
<div class="rb" style="left:858px;top:75px;width:17px"><svg width="17" height="17" viewBox="0 0 17 17"><path d="M12.800 6a5 5 0 1 0 .5 3.700" fill="none" stroke="#e6e6e6" stroke-width="1.500"/><path d="M14.500 3.500l-.8 4-3.700-1.500z" fill="#e6e6e6"/><path d="M11 9l-2-3-3 1.500 1.500 3.500z" fill="#e6e6e6"/></svg></div>
<div class="abs" style="left:879px;top:79px;width:1px;height:9px;background:#5a5a5a"></div>
<div class="rb" style="left:884px;top:75px;width:17px"><svg width="17" height="17" viewBox="0 0 17 17"><rect x="3.500" y="8" width="4" height="5.500" fill="#e6e6e6"/><rect x="10" y="8" width="3.500" height="5.500" fill="none" stroke="#e6e6e6" stroke-width="1"/><path d="M8.700 4v10" stroke="#e6e6e6" stroke-width=".8"/><path d="M5 7c0-4 7-4 7.500-.5" fill="none" stroke="#e6e6e6" stroke-width="1.100"/></svg></div>
<div class="abs" style="left:723px;top:94px;width:301px;height:20px;background:#474545"></div>
<div class="abs" style="left:864px;top:95px;width:19px;height:19px;background:#fff"><svg width="19" height="19" viewBox="0 0 19 19"><path d="M3 4.500l3.500-.5 1 3-3 1z" fill="#e8204e"/><path d="M6 6.500l2.500.5-1 1.500z" fill="#f6b0c8"/></svg></div>
<div class="ph" style="left:723px;top:118px;width:301px;padding-right:23px">Lớp<i><svg width="26" height="10" viewBox="0 0 26 10"><path d="M1.500 3v5.500h5.500v-3M4 6l4-4.500M5.500 1h3v3" fill="none" stroke="#cfcfcf" stroke-width="1"/><path d="M15.500 2l5 6M20.500 2l-5 6" stroke="#e0e0e0" stroke-width="2"/></svg></i></div>
<div class="abs" style="left:728px;top:140.500px;font-size:8.500px;color:#e0e0e0;letter-spacing:-.13px">Độ trong</div>
<div class="abs" style="left:803px;top:138px;width:176px;height:12px;background:linear-gradient(90deg,#74bef6 0,#62b0ee 30%,#4c9ada 75%,#4a96d4 100%);border:1px solid #2f6ea6"></div>
<div class="abs" style="left:985px;top:140.500px;font-size:8.500px;color:#e0e0e0;white-space:nowrap;letter-spacing:-.2px">100 %</div>
<div class="abs" style="left:728px;top:159px;font-size:8.500px;color:#e0e0e0;letter-spacing:-.26px">Pha trộn</div>
<div class="abs" style="left:804px;top:155px;width:216px;height:16px;background:linear-gradient(#424242,#383838);border-radius:2px;font-size:8.500px;color:#d8d8d8;padding:4px 0 0 2px;letter-spacing:-.42px">Bình thường<svg class="abs" style="right:4px;top:6px" width="6" height="4" viewBox="0 0 6 4"><path d="M0 0h6l-3 3.500z" fill="#b8b8b8"/></svg></div>
<div class="abs" style="left:730px;top:179px;width:8px;height:8px;border:1px solid #c8c8c8;background:#222"></div>
<div class="abs" style="left:743px;top:178.500px;font-size:8.500px;color:#e0e0e0;white-space:nowrap;letter-spacing:-.3px">Bảo vệ alpha</div>
<div class="abs" style="left:829px;top:179px;width:8px;height:8px;border:1px solid #c8c8c8;background:#222"></div>
<div class="abs" style="left:841px;top:178.500px;font-size:8.500px;color:#e0e0e0;white-space:nowrap;letter-spacing:-.3px">Xén bớt</div>
<div class="abs" style="left:927px;top:179px;width:8px;height:8px;border:1px solid #c8c8c8;background:#222"></div>
<div class="abs" style="left:940px;top:178.500px;font-size:8.500px;color:#e0e0e0;white-space:nowrap;letter-spacing:-.6px">Khóa</div>
<div class="abs" style="left:726px;top:193px;width:281px;height:179px;background:#545454"></div>
<div class="abs" style="left:726px;top:372px;width:281px;height:34px;background:#3a3a3a"></div>
<div class="abs" style="left:726px;top:194.20px;width:281px;height:29.83px;border-bottom:1px solid #333"></div>
<div class="abs" style="left:739px;top:194.20px;width:268px;height:28.83px;background:#4b96d8"></div>
<div class="abs" style="left:726px;top:194.20px;width:13px;height:28.83px;background:#606060"></div>
<div class="abs" style="left:729.500px;top:206.20px;width:6px;height:6px;border-radius:50%;background:#e2e2e2"></div>
<svg class="abs" style="left:750.500px;top:195.70px" width="27" height="26" viewBox="0 0 27 26"><rect width="27" height="26" fill="url(#ck2)"/></svg>
<div class="abs" style="left:790px;top:204.80px;font-size:9.300px;font-weight:bold;color:#fff;letter-spacing:0">Lớp6</div>
<div class="abs" style="left:726px;top:224.03px;width:281px;height:29.83px;border-bottom:1px solid #333"></div>
<div class="abs" style="left:729.500px;top:236.03px;width:6px;height:6px;border-radius:50%;background:#e2e2e2"></div>
<svg class="abs" style="left:750.500px;top:225.53px" width="27" height="26" viewBox="0 0 27 26"><rect width="27" height="26" fill="url(#ck2)"/><path d="M8 3.500l1.500-.8" stroke="#9a8ad8" stroke-width=".8"/></svg>
<div class="abs" style="left:790px;top:234.63px;font-size:9px;font-weight:normal;color:#ececec;letter-spacing:-.3px">Lớp3</div>
<div class="abs" style="left:726px;top:253.86px;width:281px;height:29.83px;border-bottom:1px solid #333"></div>
<div class="abs" style="left:729.500px;top:265.86px;width:6px;height:6px;border-radius:50%;background:#e2e2e2"></div>
<svg class="abs" style="left:750.500px;top:255.36px" width="27" height="26" viewBox="0 0 27 26"><rect width="27" height="26" fill="url(#ck2)"/><path d="M8 9.500l1.500-1.500" stroke="#5a5ad8" stroke-width="1"/></svg>
<div class="abs" style="left:790px;top:264.46px;font-size:9px;font-weight:normal;color:#ececec;letter-spacing:-.3px">Lớp3</div>
<div class="abs" style="left:726px;top:283.69px;width:281px;height:29.83px;border-bottom:1px solid #333"></div>
<div class="abs" style="left:729.500px;top:295.69px;width:6px;height:6px;border-radius:50%;background:#e2e2e2"></div>
<svg class="abs" style="left:750.500px;top:285.19px" width="27" height="26" viewBox="0 0 27 26"><rect width="27" height="26" fill="url(#ck2)"/><path d="M4 9l1.500-2 1.500 1.500" fill="none" stroke="#c060d8" stroke-width=".8"/></svg>
<div class="abs" style="left:790px;top:294.29px;font-size:9px;font-weight:normal;color:#ececec;letter-spacing:-.3px">Lớp2</div>
<div class="abs" style="left:726px;top:313.52px;width:281px;height:29.83px;border-bottom:1px solid #333"></div>
<div class="abs" style="left:729.500px;top:325.52px;width:6px;height:6px;border-radius:50%;background:#e2e2e2"></div>
<svg class="abs" style="left:750.500px;top:315.02px" width="27" height="26" viewBox="0 0 27 26"><rect width="27" height="26" fill="url(#ck2)"/><path d="M3.500 9l2-2.500 1.500 2" fill="none" stroke="#4a4ad0" stroke-width="1"/></svg>
<div class="abs" style="left:790px;top:324.12px;font-size:9px;font-weight:normal;color:#ececec;letter-spacing:-.3px">Lớp2</div>
<div class="abs" style="left:726px;top:343.35px;width:281px;height:29.83px;border-bottom:1px solid #333"></div>
<div class="abs" style="left:729.500px;top:355.35px;width:6px;height:6px;border-radius:50%;background:#e2e2e2"></div>
<svg class="abs" style="left:750.500px;top:344.85px" width="27" height="26" viewBox="0 0 27 26"><rect width="27" height="26" fill="url(#ck2)"/><path d="M3 8h8v5.500h-8z" fill="none" stroke="#f6a8cc" stroke-width="1.200"/></svg>
<div class="abs" style="left:790px;top:353.95px;font-size:9px;font-weight:normal;color:#ececec;letter-spacing:-.3px">Lớp1</div>
<svg class="abs" style="left:991px;top:202px" width="14" height="14" viewBox="0 0 14 14"><circle cx="7" cy="7" r="4.600" fill="none" stroke="#fff" stroke-width="3.400" stroke-dasharray="2.100 1.510"/><circle cx="7" cy="7" r="4" fill="#fff"/><circle cx="7" cy="7" r="1.600" fill="#4b96d8"/></svg>
<svg class="abs" width="0" height="0"><defs><pattern id="ck2" width="6" height="6" patternUnits="userSpaceOnUse"><rect width="6" height="6" fill="#fff"/><rect width="3" height="3" fill="#e6e6e6"/><rect x="3" y="3" width="3" height="3" fill="#e6e6e6"/></pattern></defs></svg>
<div class="abs" style="left:1008px;top:193px;width:14px;height:213px;background:linear-gradient(90deg,#343434,#2a2a2a)"></div>
<svg class="abs" style="left:1011px;top:195px" width="8" height="6" viewBox="0 0 8 6"><path d="M4 0l4 6h-8z" fill="#b8b8b8"/></svg>
<svg class="abs" style="left:1011px;top:399px" width="8" height="6" viewBox="0 0 8 6"><path d="M0 0h8l-4 6z" fill="#b8b8b8"/></svg>
<div class="abs" style="left:1009px;top:203px;width:12px;height:194px;background:linear-gradient(90deg,#7e7e7e,#636363);border-radius:3px"></div>
<div class="rb" style="left:728px;top:409px;width:17px"><svg width="17" height="17" viewBox="0 0 17 17"><path d="M4.500 3h5.500l2.500 2.500v8h-8z" fill="none" stroke="#e6e6e6" stroke-width="1.100"/><path d="M10 3v2.500h2.500" fill="none" stroke="#e6e6e6" stroke-width="1"/></svg></div>
<div class="rb" style="left:748px;top:409px;width:17px"><svg width="17" height="17" viewBox="0 0 17 17"><path d="M4.500 3h5.500l2.500 2.500v8h-8z" fill="none" stroke="#e6e6e6" stroke-width="1.100"/><text x="8.500" y="12" text-anchor="middle" font-size="7" font-weight="bold" fill="#e6e6e6" font-family="'Liberation Sans',sans-serif">8</text></svg></div>
<div class="rb" style="left:769px;top:409px;width:17px"><svg width="17" height="17" viewBox="0 0 17 17"><path d="M4.500 3h5.500l2.500 2.500v8h-8z" fill="none" stroke="#e6e6e6" stroke-width="1.100"/><text x="8.500" y="12" text-anchor="middle" font-size="7" font-weight="bold" fill="#e6e6e6" font-family="'Liberation Sans',sans-serif">1</text></svg></div>
<div class="rb" style="left:789px;top:409px;width:22px"><svg width="22" height="17" viewBox="0 0 22 17"><path d="M3.500 3h5l2 2v7.500h-7z" fill="none" stroke="#e6e6e6" stroke-width="1.100"/><path d="M8 12h4M10 10v4" stroke="#e6e6e6" stroke-width="1.300"/><path d="M14.500 7h5l-2.500 3.200z" fill="#e6e6e6"/></svg></div>
<div class="rb" style="left:814px;top:409px;width:17px"><svg width="17" height="17" viewBox="0 0 17 17"><path d="M2.500 4.500h4.500l1.200 1.500h6.300v7.500h-12z" fill="#e6e6e6"/></svg></div>
<div class="abs" style="left:835px;top:413px;width:1px;height:9px;background:#5a5a5a"></div>
<div class="rb" style="left:840px;top:409px;width:17px"><svg width="17" height="17" viewBox="0 0 17 17"><path d="M6.500 3.500h7v7h-7z" fill="none" stroke="#e0e0e0" stroke-width="1.100"/><path d="M3.500 6.500h7v7h-7z" fill="#444" stroke="#e0e0e0" stroke-width="1.100"/></svg></div>
<div class="rb" style="left:860px;top:409px;width:17px"><svg width="17" height="17" viewBox="0 0 17 17"><rect x="3.500" y="3.500" width="4" height="3.500" fill="#e6e6e6"/><rect x="3.500" y="10.500" width="4" height="3.500" fill="#e6e6e6"/><rect x="10" y="7" width="4.500" height="3.500" fill="#e6e6e6"/><path d="M5.500 7v3.500M7.500 8.700h2.500" stroke="#e6e6e6" stroke-width="1.100"/></svg></div>
<div class="abs" style="left:881px;top:413px;width:1px;height:9px;background:#5a5a5a"></div>
<div class="rb" style="left:885px;top:409px;width:17px"><svg width="17" height="17" viewBox="0 0 17 17"><path d="M4 5.500h9M6.800 5.500v-1.700h3.400v1.700M5 6.500h7v7.500h-7z" fill="none" stroke="#f0f0f0" stroke-width="1.300"/><path d="M7.300 8v4.500M9.700 8v4.500" stroke="#f0f0f0" stroke-width="1.100"/></svg></div>
<div class="ph" style="left:723px;top:435px;width:301px;padding-right:23px">Reference<i><svg width="26" height="10" viewBox="0 0 26 10"><path d="M1.500 3v5.500h5.500v-3M4 6l4-4.500M5.500 1h3v3" fill="none" stroke="#cfcfcf" stroke-width="1"/><path d="M15.500 2l5 6M20.500 2l-5 6" stroke="#e0e0e0" stroke-width="2"/></svg></i></div>
<div class="rb" style="left:727px;top:453.5px;width:17px"><svg width="17" height="17" viewBox="0 0 17 17"><path d="M4.500 10.500h8a2.400 2.400 0 0 0 .3-4.800 3.400 3.400 0 0 0-6.500-.8 2.800 2.800 0 0 0-1.800 5.600z" fill="#eee"/><path d="M8.500 8v6" stroke="#eee" stroke-width="2.200"/><path d="M8.500 6.800l2.600 3.200h-5.200z" fill="#444"/><path d="M8.500 9.500v4.500" stroke="#444" stroke-width="0"/></svg></div>
<div class="rb" style="left:747px;top:453.5px;width:17px"><svg width="17" height="17" viewBox="0 0 17 17"><path d="M3 5h3.500l1 1.300h6v1.200h-10.500z" fill="#e6e6e6"/><path d="M4.500 8.500h10.500l-1.800 4.500h-10.200z" fill="#e6e6e6"/></svg></div>
<div class="rb" style="left:767px;top:453.5px;width:17px;background:#262626;box-shadow:inset 0 0 0 1px #484848"><svg width="17" height="17" viewBox="0 0 17 17"><path d="M5.500 5.500l6 6M11.500 5.500l-6 6" stroke="#f0f0f0" stroke-width="1.900"/></svg></div>
<div class="abs" style="left:788px;top:457.5px;width:1px;height:9px;background:#5a5a5a"></div>
<div class="rb" style="left:792px;top:453.5px;width:17px;background:#262626;box-shadow:inset 0 0 0 1px #484848"><svg width="17" height="17" viewBox="0 0 17 17"><circle cx="7.500" cy="7.500" r="3.800" fill="none" stroke="#e6e6e6" stroke-width="1.400"/><path d="M10.300 10.300l3.200 3.200" stroke="#e6e6e6" stroke-width="1.800"/><path d="M5.700 7.500h3.600M7.500 5.700v3.600" stroke="#e6e6e6" stroke-width="1.100"/></svg></div>
<div class="rb" style="left:813px;top:453.5px;width:17px;background:#262626;box-shadow:inset 0 0 0 1px #484848"><svg width="17" height="17" viewBox="0 0 17 17"><rect x="3.500" y="4.500" width="10" height="8" fill="none" stroke="#e6e6e6" stroke-width="1.100"/><path d="M5 6l2 0-2 2zM12 6l-2 0 2 2zM5 11l2 0-2-2zM12 11l-2 0 2-2z" fill="#e6e6e6" stroke="#e6e6e6" stroke-width=".5"/></svg></div>
<div class="rb" style="left:833px;top:453.5px;width:17px;background:#262626;box-shadow:inset 0 0 0 1px #484848"><svg width="17" height="17" viewBox="0 0 17 17"><circle cx="7.500" cy="7.500" r="3.800" fill="none" stroke="#e6e6e6" stroke-width="1.400"/><path d="M10.300 10.300l3.200 3.200" stroke="#e6e6e6" stroke-width="1.800"/><path d="M5.700 7.500h3.600" stroke="#e6e6e6" stroke-width="1.100"/></svg></div>
<div class="abs" style="left:854px;top:457.5px;width:1px;height:9px;background:#5a5a5a"></div>
<div class="rb" style="left:858px;top:453.5px;width:17px;background:#262626;box-shadow:inset 0 0 0 1px #484848"><svg width="17" height="17" viewBox="0 0 17 17"><path d="M4 13.500l.8-2.700 5.200-5.200 2 2-5.200 5.200z" fill="none" stroke="#eee" stroke-width="1.300"/><path d="M9.500 4.500l3.500 3.500M11 5l1.500-1.500c.9-.9 2.400.6 1.500 1.500l-1.500 1.500z" stroke="#eee" stroke-width="1.400" fill="#eee"/></svg></div>
<div class="rb" style="left:879px;top:453.5px;width:17px;background:#4a9ce4"><svg width="17" height="17" viewBox="0 0 17 17"><path d="M5.600 14.500c-1.500-1.500-2.800-3.500-3.300-4.800-.3-.9.800-1.400 1.400-.6l1.300 1.600v-6.200c0-.9 1.300-.9 1.300 0v3.500h.5v-4.700c0-.9 1.300-.9 1.300 0v4.700h.5v-4.200c0-.9 1.300-.9 1.300 0v4.400h.5v-3.200c0-.9 1.300-.9 1.300 0v6c0 1.700-.6 2.800-1.200 3.500z" fill="#fff"/></svg></div>
<div class="abs" style="left:900px;top:457.5px;width:1px;height:9px;background:#5a5a5a"></div>
<div class="rb" style="left:904px;top:453.5px;width:17px;background:#262626;box-shadow:inset 0 0 0 1px #484848"><svg width="17" height="17" viewBox="0 0 17 17"><path d="M4.200 6a5 5 0 1 1-.5 3.700" fill="none" stroke="#e6e6e6" stroke-width="1.500"/><path d="M2.500 3.500l.8 4 3.700-1.500z" fill="#e6e6e6"/><path d="M6 9l2-3 3 1.500-1.500 3.500z" fill="#e6e6e6"/></svg></div>
<div class="rb" style="left:924px;top:453.5px;width:17px;background:#262626;box-shadow:inset 0 0 0 1px #484848"><svg width="17" height="17" viewBox="0 0 17 17"><rect x="5" y="5.500" width="7" height="6" fill="#e6e6e6"/><path d="M3 3.500l2.500 2.500M14 3.500l-2.500 2.500M3 13.500l2.500-2.500M14 13.500l-2.500-2.500" stroke="#e6e6e6" stroke-width="1.500"/></svg></div>
<div class="rb" style="left:944px;top:453.5px;width:17px;background:#262626;box-shadow:inset 0 0 0 1px #484848"><svg width="17" height="17" viewBox="0 0 17 17"><path d="M12.800 6a5 5 0 1 0 .5 3.700" fill="none" stroke="#e6e6e6" stroke-width="1.500"/><path d="M14.500 3.500l-.8 4-3.700-1.500z" fill="#e6e6e6"/><path d="M11 9l-2-3-3 1.500 1.500 3.500z" fill="#e6e6e6"/></svg></div>
<div class="abs" style="left:965px;top:457.5px;width:1px;height:9px;background:#5a5a5a"></div>
<div class="rb" style="left:970px;top:453.5px;width:17px;background:#262626;box-shadow:inset 0 0 0 1px #484848"><svg width="17" height="17" viewBox="0 0 17 17"><rect x="3.500" y="8" width="4" height="5.500" fill="#e6e6e6"/><rect x="10" y="8" width="3.500" height="5.500" fill="none" stroke="#e6e6e6" stroke-width="1"/><path d="M8.700 4v10" stroke="#e6e6e6" stroke-width=".8"/><path d="M5 7c0-4 7-4 7.500-.5" fill="none" stroke="#e6e6e6" stroke-width="1.100"/></svg></div>
<div class="ph" style="left:723px;top:478px;width:301px;padding-right:23px">Brush Size<i><svg width="26" height="10" viewBox="0 0 26 10"><path d="M1.500 3v5.500h5.500v-3M4 6l4-4.500M5.500 1h3v3" fill="none" stroke="#cfcfcf" stroke-width="1"/><path d="M15.500 2l5 6M20.500 2l-5 6" stroke="#e0e0e0" stroke-width="2"/></svg></i></div>
<div class="abs" style="left:723px;top:493px;width:286px;height:38px;background:#3a3a3a"></div>
<div class="abs" style="left:723.70px;top:493.500px;width:28.600px;height:31.500px;background:#5a5a5a;color:#f0f0f0;font-size:8px;text-align:center;padding-top:22.500px;letter-spacing:-.2px">1</div>
<div class="abs" style="left:723.70px;top:526.500px;width:28.600px;height:4.500px;background:#5a5a5a"></div>
<svg class="abs" style="left:732px;top:497px" width="12" height="12" viewBox="0 0 12 12"><circle cx="6.00" cy="5" r="0.30" fill="#f4f4f4"/></svg>
<div class="abs" style="left:753.76px;top:493.500px;width:28.600px;height:31.500px;background:#5a5a5a;color:#f0f0f0;font-size:8px;text-align:center;padding-top:22.500px;letter-spacing:-.2px">1.5</div>
<div class="abs" style="left:753.76px;top:526.500px;width:28.600px;height:4.500px;background:#5a5a5a"></div>
<svg class="abs" style="left:762px;top:497px" width="12" height="12" viewBox="0 0 12 12"><circle cx="6.06" cy="5" r="0.40" fill="#f4f4f4"/></svg>
<div class="abs" style="left:783.82px;top:493.500px;width:28.600px;height:31.500px;background:#5a5a5a;color:#f0f0f0;font-size:8px;text-align:center;padding-top:22.500px;letter-spacing:-.2px">2</div>
<div class="abs" style="left:783.82px;top:526.500px;width:28.600px;height:4.500px;background:#5a5a5a"></div>
<svg class="abs" style="left:792px;top:497px" width="12" height="12" viewBox="0 0 12 12"><circle cx="6.12" cy="5" r="0.60" fill="#f4f4f4"/></svg>
<div class="abs" style="left:813.88px;top:493.500px;width:28.600px;height:31.500px;background:#5a5a5a;color:#f0f0f0;font-size:8px;text-align:center;padding-top:22.500px;letter-spacing:-.2px">3</div>
<div class="abs" style="left:813.88px;top:526.500px;width:28.600px;height:4.500px;background:#5a5a5a"></div>
<svg class="abs" style="left:822px;top:497px" width="12" height="12" viewBox="0 0 12 12"><circle cx="6.18" cy="5" r="0.80" fill="#f4f4f4"/></svg>
<div class="abs" style="left:843.94px;top:493.500px;width:28.600px;height:31.500px;background:#5a5a5a;color:#f0f0f0;font-size:8px;text-align:center;padding-top:22.500px;letter-spacing:-.2px">4</div>
<div class="abs" style="left:843.94px;top:526.500px;width:28.600px;height:4.500px;background:#5a5a5a"></div>
<svg class="abs" style="left:852px;top:497px" width="12" height="12" viewBox="0 0 12 12"><circle cx="6.24" cy="5" r="1.20" fill="#f4f4f4"/></svg>
<div class="abs" style="left:874.00px;top:493.500px;width:28.600px;height:31.500px;background:#5a5a5a;color:#f0f0f0;font-size:8px;text-align:center;padding-top:22.500px;letter-spacing:-.2px">5</div>
<div class="abs" style="left:874.00px;top:526.500px;width:28.600px;height:4.500px;background:#5a5a5a"></div>
<svg class="abs" style="left:882px;top:497px" width="12" height="12" viewBox="0 0 12 12"><circle cx="6.30" cy="5" r="1.50" fill="#f4f4f4"/></svg>
<div class="abs" style="left:904.06px;top:493.500px;width:28.600px;height:31.500px;background:#5a5a5a;color:#f0f0f0;font-size:8px;text-align:center;padding-top:22.500px;letter-spacing:-.2px">7</div>
<div class="abs" style="left:904.06px;top:526.500px;width:28.600px;height:4.500px;background:#5a5a5a"></div>
<svg class="abs" style="left:912px;top:497px" width="12" height="12" viewBox="0 0 12 12"><circle cx="6.36" cy="5" r="2.20" fill="#f4f4f4"/></svg>
<div class="abs" style="left:934.12px;top:493.500px;width:28.600px;height:31.500px;background:#5a5a5a;color:#f0f0f0;font-size:8px;text-align:center;padding-top:22.500px;letter-spacing:-.2px">10</div>
<div class="abs" style="left:934.12px;top:526.500px;width:28.600px;height:4.500px;background:#5a5a5a"></div>
<svg class="abs" style="left:942px;top:497px" width="12" height="12" viewBox="0 0 12 12"><circle cx="6.42" cy="5" r="3.20" fill="#f4f4f4"/></svg>
<div class="abs" style="left:964.18px;top:493.500px;width:28.600px;height:31.500px;background:#5a5a5a;color:#f0f0f0;font-size:8px;text-align:center;padding-top:22.500px;letter-spacing:-.2px">12</div>
<div class="abs" style="left:964.18px;top:526.500px;width:28.600px;height:4.500px;background:#5a5a5a"></div>
<svg class="abs" style="left:972px;top:497px" width="12" height="12" viewBox="0 0 12 12"><circle cx="6.48" cy="5" r="3.90" fill="#f4f4f4"/></svg>
<div class="abs" style="left:1009px;top:493px;width:14px;height:38px;background:linear-gradient(90deg,#343434,#2a2a2a)"></div>
<svg class="abs" style="left:1012px;top:495px" width="8" height="6" viewBox="0 0 8 6"><path d="M4 0l4 6h-8z" fill="#b8b8b8"/></svg>
<svg class="abs" style="left:1012px;top:523px" width="8" height="6" viewBox="0 0 8 6"><path d="M0 0h8l-4 6z" fill="#b8b8b8"/></svg>
<div class="abs" style="left:1010px;top:503px;width:12px;height:18px;background:linear-gradient(#8a8a8a 0,#8a8a8a 30%,#5a5a5a 30%,#5a5a5a 100%);border-radius:3px"></div>
<div class="abs" style="left:0;top:531px;width:1024px;height:15px;background:#222"></div>
<div class="st" style="left:5px">5511 * 5511 pixel</div>
<div class="st" style="left:76px">(40 * 40cm)</div>
<div class="st" style="left:128px">350 dpi</div>
<div class="st" style="left:163px;letter-spacing:-.6px">66 %</div>
<div class="st" style="left:189px;letter-spacing:-.4px">( 1604, 2020 )</div>
<div class="st" style="left:246px;letter-spacing:-.05px">Vẽ một đường thẳng bằng cách giữ phím Shift, Thay đổi cỡ cọ bằng cách giữ phím Ctrl, Alt và kéo</div>

</body>
</html>
